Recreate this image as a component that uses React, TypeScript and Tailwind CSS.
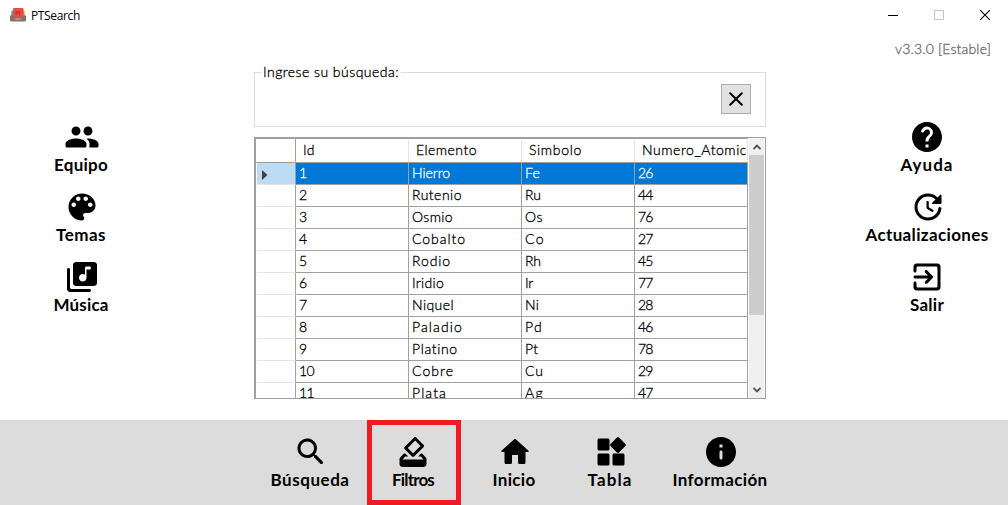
import { useLayoutEffect, useRef, type ReactNode } from "react";

// Spreads a text's letters so that it takes exactly the given width.
function Fit({ w, children }: { w: number; children: string }) {
  const ref = useRef<HTMLSpanElement>(null);
  useLayoutEffect(() => {
    const el = ref.current;
    if (!el) return;
    el.style.letterSpacing = "0px";
    const natural = el.getBoundingClientRect().width;
    el.style.letterSpacing = `${(w - natural) / children.length}px`;
  }, [w, children]);
  return (
    <span ref={ref} className="inline-block whitespace-nowrap">
      {children}
    </span>
  );
}

function Icon({ d }: { d: string }) {
  return (
    <svg viewBox="0 0 24 24" className="block size-9 shrink-0" fill="currentColor">
      <path d={d} />
    </svg>
  );
}

const icons = {
  people:
    "M16 11c1.66 0 2.99-1.34 2.99-3S17.66 5 16 5s-3 1.34-3 3 1.34 3 3 3zm-8 0c1.66 0 2.99-1.34 2.99-3S9.66 5 8 5 5 6.34 5 8s1.34 3 3 3zm0 2c-2.33 0-7 1.17-7 3.5V18c0 .55.45 1 1 1h12c.55 0 1-.45 1-1v-1.5c0-2.33-4.67-3.5-7-3.5zm8 0c-.29 0-.62.02-.97.05.02.01.03.03.04.04 1.14.83 1.93 1.94 1.93 3.41V18c0 .35-.07.69-.18 1H22c.55 0 1-.45 1-1v-1.5c0-2.33-4.67-3.5-7-3.5z",
  palette:
    "M12 3c-4.97 0-9 4.03-9 9s4.03 9 9 9c.83 0 1.5-.67 1.5-1.5 0-.39-.15-.74-.39-1.01-.23-.26-.38-.61-.38-.99 0-.83.67-1.5 1.5-1.5H16c2.76 0 5-2.24 5-5 0-4.42-4.03-8-9-8zm-5.5 9c-.83 0-1.5-.67-1.5-1.5S5.67 9 6.5 9 8 9.67 8 10.5 7.33 12 6.5 12zm3-4C8.67 8 8 7.33 8 6.5S8.67 5 9.5 5s1.5.67 1.5 1.5S10.33 8 9.5 8zm5 0c-.83 0-1.5-.67-1.5-1.5S13.67 5 14.5 5s1.5.67 1.5 1.5S15.33 8 14.5 8zm3 4c-.83 0-1.5-.67-1.5-1.5S16.67 9 17.5 9s1.5.67 1.5 1.5-.67 1.5-1.5 1.5z",
  music:
    "M20 2H8c-1.1 0-2 .9-2 2v12c0 1.1.9 2 2 2h12c1.1 0 2-.9 2-2V4c0-1.1-.9-2-2-2zm-3 5h-2v5.5c0 1.38-1.12 2.5-2.5 2.5S10 13.88 10 12.5s1.12-2.5 2.5-2.5c.57 0 1.08.19 1.5.51V6c0-.55.45-1 1-1h2c.55 0 1 .45 1 1s-.45 1-1 1zM3 6c-.55 0-1 .45-1 1v13c0 1.1.9 2 2 2h13c.55 0 1-.45 1-1s-.45-1-1-1H5c-.55 0-1-.45-1-1V7c0-.55-.45-1-1-1z",
  help:
    "M12 2C6.48 2 2 6.48 2 12s4.48 10 10 10 10-4.48 10-10S17.52 2 12 2zm1 17h-2v-2h2v2zm2.07-7.75l-.9.92c-.5.51-.86.97-1.04 1.69-.08.32-.13.68-.13 1.14h-2v-.5c0-.46.08-.9.22-1.31.2-.58.53-1.1.95-1.52l1.24-1.26c.46-.44.68-1.1.55-1.8-.13-.72-.69-1.33-1.39-1.53-1.11-.31-2.14.32-2.47 1.27-.12.37-.43.65-.82.65h-.3C8.4 9 8 8.44 8.16 7.88c.43-1.47 1.68-2.59 3.23-2.83 1.52-.24 2.97.55 3.87 1.8 1.18 1.63.83 3.38-.19 4.4z",
  update:
    "M11.75 8c-.41 0-.75.34-.75.75v3.68c0 .35.19.68.49.86l3.12 1.85c.36.21.82.09 1.03-.26.21-.36.1-.82-.26-1.03l-2.88-1.71V8.75c0-.41-.34-.75-.75-.75zM21 9.5V4.21c0-.45-.54-.67-.85-.35l-1.78 1.78c-1.81-1.81-4.39-2.85-7.21-2.6-4.19.38-7.64 3.75-8.1 7.94C2.46 16.4 6.69 21 12 21c4.59 0 8.38-3.44 8.93-7.88.07-.6-.4-1.12-1-1.12-.5 0-.92.37-.98.86-.43 3.49-3.44 6.19-7.05 6.14-3.71-.05-6.84-3.18-6.9-6.9C4.94 8.2 8.11 5 12 5c1.93 0 3.68.79 4.95 2.05l-2.09 2.09c-.32.32-.1.86.35.86h5.29c.28 0 .5-.22.5-.5z",
  exit:
    "M10.79 16.29c.39.39 1.02.39 1.41 0l3.59-3.59c.39-.39.39-1.02 0-1.41L12.2 7.7c-.39-.39-1.02-.39-1.41 0-.39.39-.39 1.02 0 1.41L12.67 11H4c-.55 0-1 .45-1 1s.45 1 1 1h8.67l-1.88 1.88c-.39.39-.38 1.03 0 1.41zM19 3H5c-1.11 0-2 .9-2 2v3c0 .55.45 1 1 1s1-.45 1-1V6c0-.55.45-1 1-1h12c.55 0 1 .45 1 1v12c0 .55-.45 1-1 1H6c-.55 0-1-.45-1-1v-2c0-.55-.45-1-1-1s-1 .45-1 1v3c0 1.1.9 2 2 2h14c1.1 0 2-.9 2-2V5c0-1.1-.9-2-2-2z",
  search:
    "M15.5 14h-.79l-.28-.27c1.2-1.4 1.82-3.31 1.48-5.34-.47-2.78-2.79-5-5.59-5.34-4.23-.52-7.79 3.04-7.27 7.27.34 2.8 2.56 5.12 5.34 5.59 2.03.34 3.94-.28 5.34-1.48l.27.28v.79l4.25 4.25c.41.41 1.08.41 1.49 0 .41-.41.41-1.08 0-1.49L15.5 14zm-6 0C7.01 14 5 11.99 5 9.5S7.01 5 9.5 5 14 7.01 14 9.5 11.99 14 9.5 14z",
  vote:
    "M18 13h-.68l-2 2h1.91L19 17H5l1.78-2h2.05l-2-2H6l-2.42 2.42c-.37.37-.58.88-.58 1.41V20c0 1.1.89 2 1.99 2H19c1.1 0 2-.89 2-2v-3.17c0-.53-.21-1.04-.59-1.41L18 13zm-1-5.05l-4.95 4.95-3.54-3.54 4.95-4.95L17 7.95zm-4.24-5.66L6.39 8.66c-.39.39-.39 1.02 0 1.41l4.95 4.95c.39.39 1.02.39 1.41 0l6.36-6.36c.39-.39.39-1.02 0-1.41L14.16 2.3c-.38-.4-1.01-.4-1.4-.01z",
  home:
    "M10 19v-5h4v5c0 .55.45 1 1 1h3c.55 0 1-.45 1-1v-7h1.7c.46 0 .68-.57.33-.87L12.67 3.6c-.38-.34-.96-.34-1.34 0l-8.36 7.53c-.34.3-.13.87.33.87H5v7c0 .55.45 1 1 1h3c.55 0 1-.45 1-1z",
  widgets:
    "M13 14v6c0 .55.45 1 1 1h6c.55 0 1-.45 1-1v-6c0-.55-.45-1-1-1h-6c-.55 0-1 .45-1 1zm-9 7h6c.55 0 1-.45 1-1v-6c0-.55-.45-1-1-1H4c-.55 0-1 .45-1 1v6c0 .55.45 1 1 1zM3 4v6c0 .55.45 1 1 1h6c.55 0 1-.45 1-1V4c0-.55-.45-1-1-1H4c-.55 0-1 .45-1 1zm12.95-1.6L11.7 6.64c-.39.39-.39 1.02 0 1.41l4.25 4.25c.39.39 1.02.39 1.41 0l4.25-4.25c.39-.39.39-1.02 0-1.41L17.37 2.4c-.39-.39-1.03-.39-1.42 0z",
  info:
    "M12 2C6.48 2 2 6.48 2 12s4.48 10 10 10 10-4.48 10-10S17.52 2 12 2zm0 15c-.55 0-1-.45-1-1v-4c0-.55.45-1 1-1s1 .45 1 1v4c0 .55-.45 1-1 1zm1-8h-2V7h2v2z",
};

function NavButton({ icon, label, w, pad = "pl-0.5" }: { icon: string; label: string; w: number; pad?: string }) {
  return (
    <button className="flex flex-col items-center">
      <span className={pad}>
        <Icon d={icon} />
      </span>
      <span className="text-[17px] leading-5 font-bold">
        <Fit w={w}>{label}</Fit>
      </span>
    </button>
  );
}

function TitleBar() {
  return (
    <header className="flex h-[30px] shrink-0 items-center pl-2.5">
      <svg viewBox="0 0 16 16" className="size-4">
        <path d="M1.5 4 4 2.5V11H1z" fill="#3f9fc0" />
        <path d="M14.500 4 12 2.500V11h3z" fill="#e8a33c" />
        <rect x="3" y="1" width="10.500" height="10" rx="1" fill="#f4493d" />
        <path d="M6 8.500V4.500h2v2H6M9.500 4v4.500M8.700 5.500h2" stroke="#a92d2a" strokeOpacity="0.7" fill="none" />
        <path d="M0 8.500h4l1 1.500h6l1-1.500h4V13a1.500 1.500 0 0 1-1.500 1.500h-13A1.500 1.500 0 0 1 0 13z" fill="#8d6e63" />
        <path d="M5 12h6" stroke="#cbb8ae" />
      </svg>
      <h1 className="mt-0.5 ml-[5px] font-['Open_Sans',sans-serif] text-xs">
        <Fit w={49}>PTSearch</Fit>
      </h1>
      <div className="ml-auto flex items-center gap-[35px] pr-[18px]">
        <svg viewBox="0 0 10 10" className="mr-px size-2.5" stroke="#000">
          <path d="M0 5.500h10" />
        </svg>
        <svg viewBox="0 0 10 10" className="mr-px size-2.5" stroke="#c4c4c4" fill="none">
          <path d="M.5.500h9v9h-9z" />
        </svg>
        <svg viewBox="0 0 10 10" className="size-2.5" stroke="#000" strokeWidth="1.100">
          <path d="M0 0l10 10M10 0 0 10" />
        </svg>
      </div>
    </header>
  );
}

const rows: [string, string, number, string, number, string][] = [
  ["1", "Hierro", 38, "Fe", 15, "26"],
  ["2", "Rutenio", 50, "Ru", 16, "44"],
  ["3", "Osmio", 41, "Os", 18, "76"],
  ["4", "Cobalto", 54, "Co", 20, "27"],
  ["5", "Rodio", 39, "Rh", 16, "45"],
  ["6", "Iridio", 32, "Ir", 8, "77"],
  ["7", "Niquel", 42, "Ni", 14, "28"],
  ["8", "Paladio", 51, "Pd", 18, "46"],
  ["9", "Platino", 46, "Pt", 13, "78"],
  ["10", "Cobre", 42, "Cu", 19, "29"],
  ["11", "Plata", 35, "Ag", 19, "47"],
];

function Cell({ children }: { children: ReactNode }) {
  return <div className="h-full overflow-hidden border-r border-[#a0a0a0] pl-[3px]">{children}</div>;
}

function HeadCell({ children }: { children: ReactNode }) {
  return <div className="my-px h-[22px] overflow-hidden border-r border-[#e5e5e5] pl-[7px]">{children}</div>;
}

const columns = "grid grid-cols-[39px_113px_113px_113px_113px]";

function DataTable() {
  return (
    <div className="flex h-[262px] w-[512px] overflow-hidden border border-l-2 border-[#a0a0a4] text-sm font-light [-webkit-text-stroke:0.3px]">
      <div className="w-[492px] shrink-0 overflow-hidden">
        <div className={`${columns} h-[25px] border-t border-b border-[#a0a0a0] pl-px leading-[20px]`}>
          <div className="border-r border-[#a0a0a0]" />
          <HeadCell><Fit w={12}>Id</Fit></HeadCell>
          <HeadCell><Fit w={61}>Elemento</Fit></HeadCell>
          <HeadCell><Fit w={53}>Simbolo</Fit></HeadCell>
          <HeadCell><Fit w={105}>Numero_Atomic</Fit></HeadCell>
        </div>
        {rows.map(([id, name, nameW, symbol, symbolW, num], i) => (
          <div key={id} className={`${columns} h-[22px] pl-px leading-[20px]`}>
            <div
              className={`flex items-center border-r border-b border-r-[#a0a0a0] border-b-[#e5e5e5] pl-[5px] ${i === 0 ? "bg-[#bcdcf4]" : ""}`}
            >
              {i === 0 && (
                <svg viewBox="0 0 6 10" className="mt-0.5 h-2.5 w-1.5" fill="#404040">
                  <path d="M0 0l5.500 5L0 10z" />
                </svg>
              )}
            </div>
            <div
              className={`col-span-4 grid grid-cols-4 overflow-hidden border-b border-[#a0a0a0] ${i === 0 ? "bg-[#0078d7] text-white" : ""}`}
            >
              <Cell><Fit w={id.length * 7.5}>{id}</Fit></Cell>
              <Cell><Fit w={nameW}>{name}</Fit></Cell>
              <Cell><Fit w={symbolW}>{symbol}</Fit></Cell>
              <Cell><Fit w={14.5}>{num}</Fit></Cell>
            </div>
          </div>
        ))}
      </div>
      <div className="mt-px ml-px flex w-[15px] flex-col bg-[#f0f0f0]">
        <div className="flex h-4 items-center justify-center">
          <svg viewBox="0 0 8 6" className="h-1.5 w-2" fill="none" stroke="#505050" strokeWidth="1.800">
            <path d="M.5 5 4 1.500 7.500 5" />
          </svg>
        </div>
        <div className="h-40 bg-[#cdcdcd]" />
        <div className="mt-auto flex h-[17px] items-center justify-center">
          <svg viewBox="0 0 8 6" className="h-1.5 w-2" fill="none" stroke="#505050" strokeWidth="1.800">
            <path d="M.5 1 4 4.500 7.500 1" />
          </svg>
        </div>
      </div>
    </div>
  );
}

export default function App() {
  return (
    <div className="flex h-[505px] w-[1008px] flex-col overflow-hidden bg-white font-['Lato','Liberation_Sans',sans-serif] text-black">
      <TitleBar />
      <main className="flex h-[390px] shrink-0">
        <nav className="flex w-[162px] flex-col gap-3.5 pt-[89px]">
          <NavButton icon={icons.people} label="Equipo" w={54} />
          <NavButton icon={icons.palette} label="Temas" w={50} />
          <NavButton icon={icons.music} label="Música" w={55} />
        </nav>
        <section className="ml-[92px] w-[512px] pt-[34px]">
          <fieldset className="flex h-[63px] w-[512px] justify-end border border-[#dcdcdc] pr-3.5">
            <legend className="ml-1.5 h-4 px-0.5 text-sm leading-4 font-light [-webkit-text-stroke:0.3px]">
              <Fit w={136}>Ingrese su búsqueda:</Fit>
            </legend>
            <button className="mt-1 flex size-[30px] items-center justify-center border border-[#adadad] bg-[#e1e1e1]">
              <svg viewBox="0 0 14 14" className="size-3.5" stroke="#000" strokeWidth="2" strokeLinecap="round">
                <path d="M1.200 1.200l11.600 11.600M12.800 1.200 1.200 12.800" />
              </svg>
            </button>
          </fieldset>
          <div className="pt-2.5">
            <DataTable />
          </div>
        </section>
        <aside className="flex w-[242px] flex-col">
          <div className="flex h-[89px] justify-end pt-[9px] pr-[17px] text-sm leading-5 font-light text-[#696969] [-webkit-text-stroke:0.3px]">
            <Fit w={96}>v3.3.0 [Estable]</Fit>
          </div>
          <nav className="ml-[81px] flex w-[160px] flex-col gap-3.5">
            <NavButton icon={icons.help} label="Ayuda" w={53} pad="pl-0" />
            <NavButton icon={icons.update} label="Actualizaciones" w={123} pad="pl-px" />
            <NavButton icon={icons.exit} label="Salir" w={34} pad="pl-0" />
          </nav>
        </aside>
      </main>
      <footer className="flex h-[85px] shrink-0 bg-[#dcdcdc] pl-[253px]">
        <div className="flex w-[114px] justify-center pt-3.5">
          <NavButton icon={icons.search} label="Búsqueda" w={79} pad="pl-px" />
        </div>
        <div className="flex w-[94px] justify-center border-5 border-[#ed1c24] pt-[9px] pr-0.5">
          <NavButton icon={icons.vote} label="Filtros" w={42} pad="pl-0" />
        </div>
        <div className="flex w-[106px] justify-center pt-3.5">
          <NavButton icon={icons.home} label="Inicio" w={43} />
        </div>
        <div className="flex w-[86px] justify-center pt-3.5">
          <NavButton icon={icons.widgets} label="Tabla" w={45} />
        </div>
        <div className="flex w-[134px] justify-center pt-3.5">
          <NavButton icon={icons.info} label="Información" w={95} />
        </div>
      </footer>
    </div>
  );
}
